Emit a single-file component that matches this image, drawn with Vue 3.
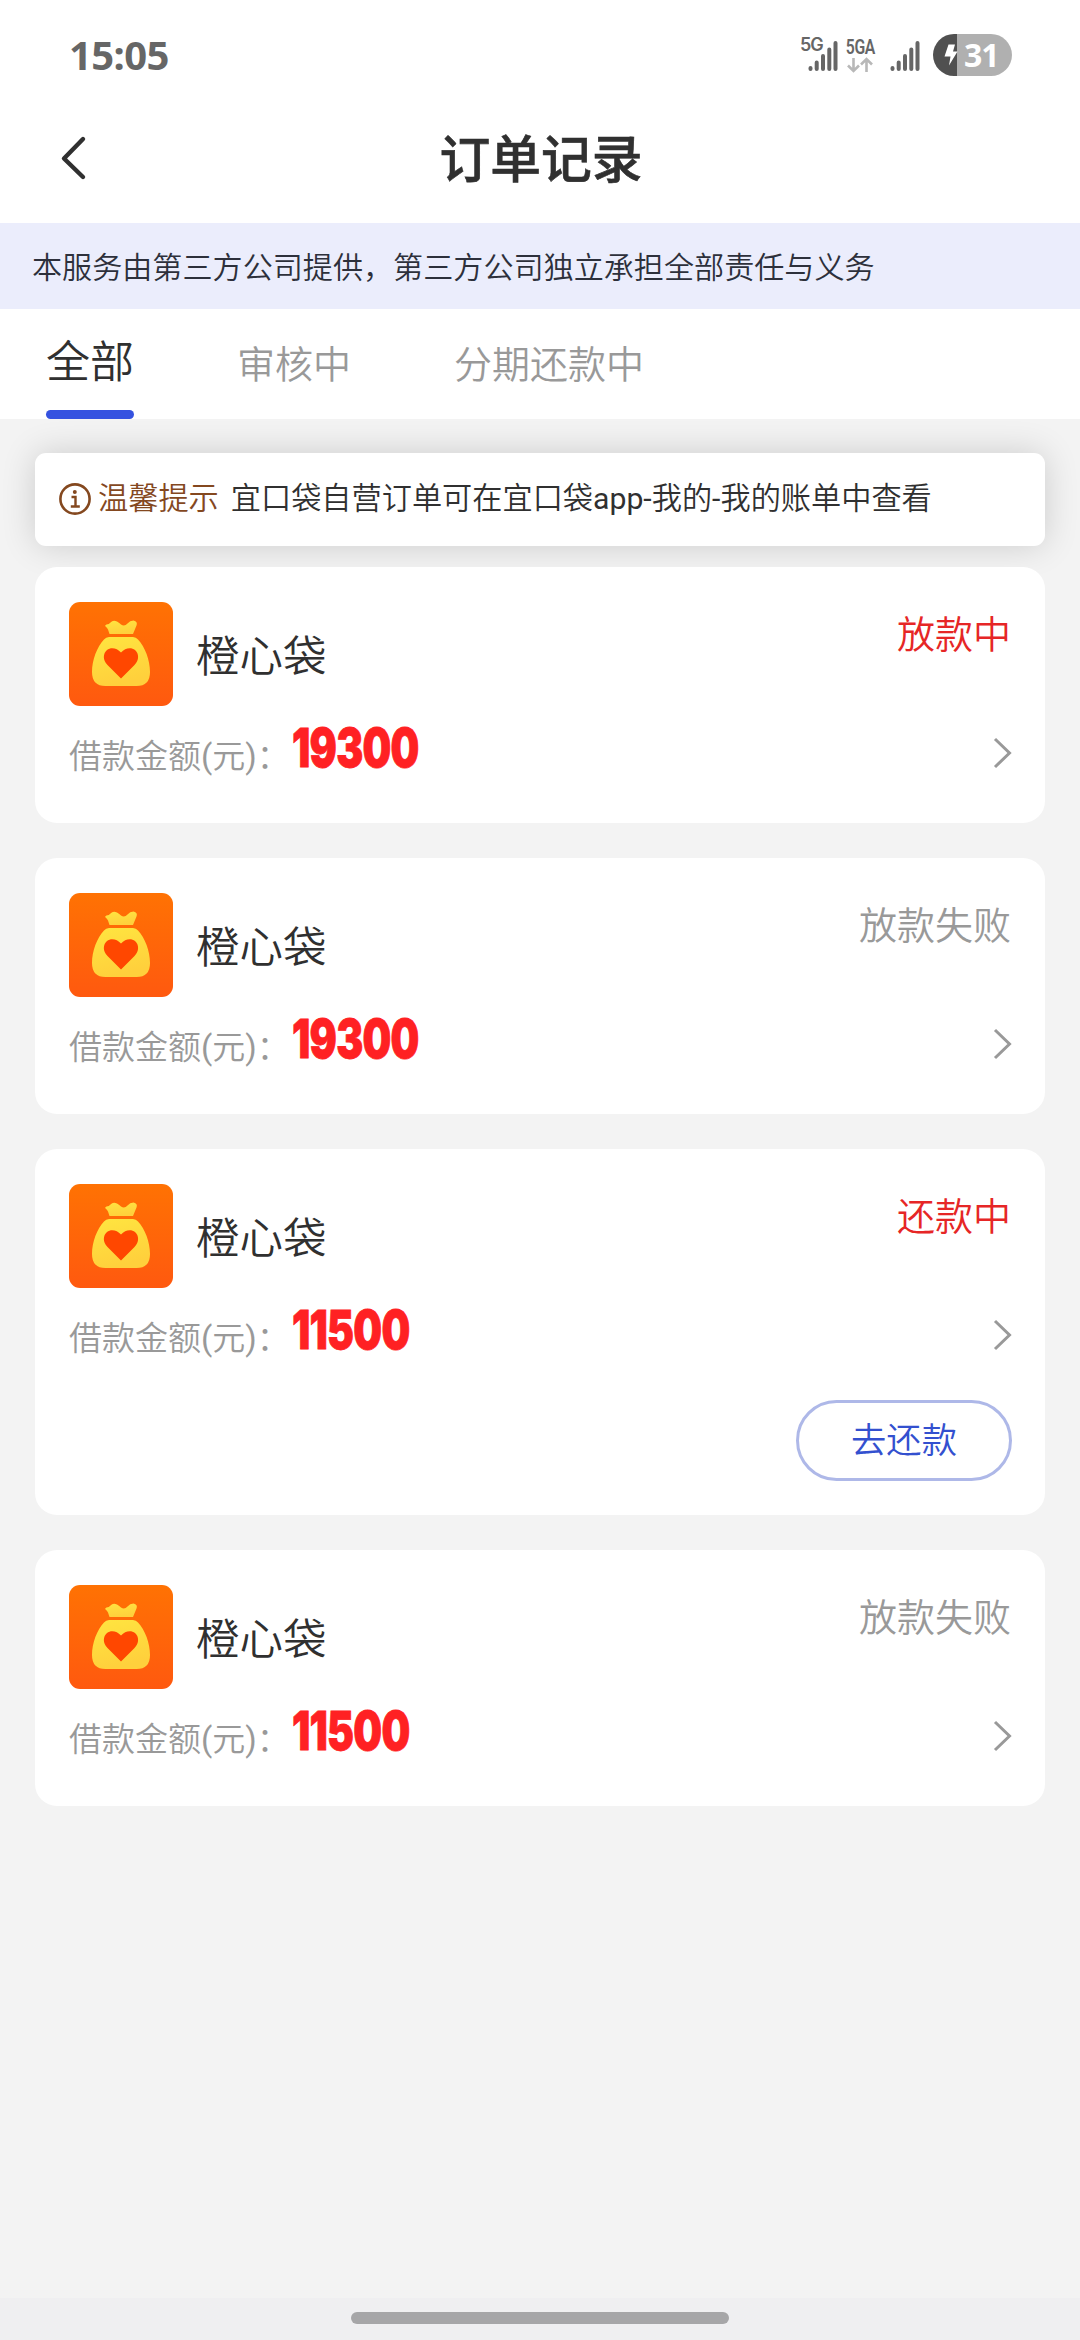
<script setup>
const tabs = ['全部', '审核中', '分期还款中']
const orders = [
  { id: 1, name: '橙心袋', amount: '19300', status: '放款中', active: true },
  { id: 2, name: '橙心袋', amount: '19300', status: '放款失败', active: false },
  { id: 3, name: '橙心袋', amount: '11500', status: '还款中', active: true, action: '去还款' },
  { id: 4, name: '橙心袋', amount: '11500', status: '放款失败', active: false },
]
</script>

<template>
  <div class="screen">
    <div class="statusbar">
      <span class="time">15:05</span>
      <div class="indicators">
        <div class="sim">
          <span class="net">5G</span>
          <svg class="bars" width="30" height="32" viewBox="0 0 30 32">
            <path d="M2.5 28v1M8.7 22.500v6.500M15 16v13M21.300 9.500v19.500M27.500 3v26" />
          </svg>
        </div>
        <div class="data">
          <span class="fivega">5GA</span>
          <svg class="arrows" width="26" height="16" viewBox="0 0 26 16">
            <path d="M6.500 1v13M1 8.500l5.500 5.500 5.500-5.500M19.500 15V2M14 7.500L19.500 2 25 7.500" />
          </svg>
        </div>
        <svg class="bars second" width="30" height="32" viewBox="0 0 30 32">
          <path d="M2.500 28v1M8.700 22.500v6.500M15 16v13M21.300 9.500v19.500M27.500 3v26" />
        </svg>
        <div class="battery">
          <svg width="14" height="22" viewBox="0 0 14 22">
            <path d="M4.500 0.500H11L9 7.500H13.500L5 21.500L6.500 12.500H0.500Z" fill="#fff" />
          </svg>
          <span>31</span>
        </div>
      </div>
    </div>

    <header class="header">
      <svg class="back" width="28" height="46" viewBox="0 0 28 46">
        <path d="M23 4L4 23.500L23 42" />
      </svg>
      <h1>订单记录</h1>
    </header>

    <div class="banner">本服务由第三方公司提供，第三方公司独立承担全部责任与义务</div>

    <nav class="tabs">
      <div v-for="(tab, i) in tabs" :key="tab" class="tab" :class="{ current: i === 0 }">{{ tab }}</div>
    </nav>

    <main class="content">
      <div class="notice">
        <svg width="32" height="32" viewBox="0 0 32 32">
          <circle cx="16" cy="16" r="14.600" fill="none" stroke="#84481f" stroke-width="2.600" />
          <circle cx="15.800" cy="9" r="2" fill="#84481f" />
          <path d="M12.500 14h4v9.500M11.800 23.500h9" fill="none" stroke="#84481f" stroke-width="2.400" />
        </svg>
        <span class="tip">温馨提示</span>
        <span class="message">宜口袋自营订单可在宜口袋<span class="latin">app-</span>我的<span class="latin">-</span>我的账单中查看</span>
      </div>

      <section v-for="o in orders" :key="o.id" class="card">
        <div class="top">
          <svg class="logo" width="104" height="104" viewBox="0 0 104 104">
            <defs>
              <linearGradient :id="'bg' + o.id" x1="0" y1="0" x2="0" y2="1">
                <stop offset="0" stop-color="#ff7203" />
                <stop offset="1" stop-color="#ff590f" />
              </linearGradient>
              <linearGradient :id="'bag' + o.id" x1="0" y1="0" x2="0.300" y2="1">
                <stop offset="0" stop-color="#ffe540" />
                <stop offset="1" stop-color="#ffd03c" />
              </linearGradient>
            </defs>
            <rect width="104" height="104" rx="11" :fill="`url(#bg${o.id})`" />
            <path
              :fill="`url(#bag${o.id})`"
              d="M40.500 32L39 27.500Q38 25.500 36.500 24.500Q35.500 23 37.500 22.500Q40 22.300 41.500 20.500Q44 17.500 48 19.500Q50.500 21 52 22.500Q55.500 25 58.500 21.500Q61 18.500 64.500 18.500Q69 19.500 67.500 23.500L64 32Z"
            />
            <path
              :fill="`url(#bag${o.id})`"
              d="M40 35H64Q67 35 69 37.500C76 45 81 58 81 70Q81 84 67.500 84H36.500Q23 84 23 70C23 58 28 45 35 37.500Q37 35 40 35Z"
            />
            <path
              fill="#ff4700"
              d="M52 76.500L38.500 63C33.500 58 34 51.500 38 48C42 44.800 48 46 52 50.500C56 46 62 44.800 66 48C70 51.500 70.500 58 65.500 63Z"
            />
          </svg>
          <span class="name">{{ o.name }}</span>
          <span class="status" :class="{ active: o.active }">{{ o.status }}</span>
        </div>
        <div class="detail">
          <span class="label">借款金额<span class="latin">(</span>元<span class="latin">)</span>：</span>
          <span class="amount">{{ o.amount }}</span>
          <svg class="chevron" width="19" height="32" viewBox="0 0 19 32">
            <path d="M2 2L16.500 16L2 30" />
          </svg>
        </div>
        <div v-if="o.action" class="actions">
          <button class="repay">{{ o.action }}</button>
        </div>
      </section>
    </main>

    <footer class="gesture"><i></i></footer>
  </div>
</template>

<style>
body {
  background: #f3f3f3;
}
</style>

<style scoped>
.screen {
  display: flex;
  flex-direction: column;
  width: 1080px;
  height: 2340px;
  overflow: hidden;
  background: #f3f3f3;
  color: #303030;
  font-family: Roboto, "Noto Sans CJK SC", sans-serif;
  font-weight: 350;
}
svg {
  display: block;
  flex: none;
}
.latin {
  font-weight: 400;
}
.statusbar {
  display: flex;
  flex: none;
  justify-content: space-between;
  align-items: center;
  height: 110px;
  padding: 0 68px 0 69px;
  background: #fff;
}
.time {
  font: 700 40px/50px "Noto Sans", sans-serif;
  letter-spacing: -0.6px;
  color: #666;
}
.indicators {
  display: flex;
  align-items: center;
}
.sim {
  display: flex;
  align-items: flex-start;
  width: 37px;
  margin-right: 9px;
}
.net {
  width: 8px;
  white-space: nowrap;
  font: 600 18px/18px Inter, sans-serif;
  letter-spacing: -1px;
  color: #666;
  margin-top: -2px;
}
.bars {
  fill: none;
  stroke: #666;
  stroke-width: 4;
  stroke-linecap: round;
}
.sim .bars {
  margin-top: 2px;
}
.second {
  margin: 2px 13px 0 16px;
}
.data {
  display: flex;
  flex-direction: column;
  align-items: center;
  width: 28px;
}
.fivega {
  font: 600 21px/20px Roboto, sans-serif;
  letter-spacing: -0.5px;
  color: #666;
  transform: scaleX(0.75);
}
.arrows {
  fill: none;
  stroke: #b8b8b8;
  stroke-width: 2.6;
}
.battery {
  display: flex;
  align-items: center;
  width: 79px;
  height: 42px;
  box-sizing: border-box;
  padding-left: 11px;
  border-radius: 21px;
  background: linear-gradient(90deg, #505050 24px, #b0b0b0 24px);
  color: #fff;
  font: 700 32px/42px "Noto Sans", sans-serif;
}
.battery span {
  margin: -1px 0 0 6px;
  letter-spacing: -1px;
}
.header {
  display: grid;
  grid-template-columns: 120px 1fr 120px;
  align-items: center;
  flex: none;
  height: 100px;
  padding-bottom: 13px;
  background: #fff;
}
.back {
  margin: -4px 0 0 60px;
  fill: none;
  stroke: #303030;
  stroke-width: 4.4;
  stroke-linecap: round;
  stroke-linejoin: round;
}
h1 {
  margin: 2px 0 0 2px;
  text-align: center;
  font-size: 50.8px;
  line-height: 70px;
  font-weight: 500;
  -webkit-text-stroke: 0.6px #303030;
}
.banner {
  flex: none;
  height: 86px;
  padding-left: 32px;
  background: #ebedfc;
  color: #2d303b;
  font-size: 30.1px;
  line-height: 89px;
  white-space: nowrap;
}
.tabs {
  display: flex;
  align-items: baseline;
  flex: none;
  gap: 103px;
  height: 110px;
  padding-left: 46px;
  background: #fff;
  box-sizing: border-box;
}
.tab {
  color: #999;
  font-size: 38px;
}
.tab.current {
  display: flex;
  flex-direction: column;
  color: #303030;
  font-size: 44px;
  line-height: 109px;
}
.tab.current::after {
  content: "";
  height: 9px;
  margin-top: -8px;
  border-radius: 5px;
  background: #3552e0;
}
.content {
  display: flex;
  flex: 1;
  flex-direction: column;
  gap: 35px;
  overflow: hidden;
  padding: 34px 35px 0;
}
.notice {
  display: flex;
  align-items: center;
  flex: none;
  height: 93px;
  margin-bottom: -14px;
  padding: 0 24px 2px;
  box-sizing: border-box;
  border-radius: 11px;
  background: #fff;
  box-shadow: 0 0 34px rgba(0, 0, 0, 0.16);
  font-size: 30.2px;
  white-space: nowrap;
}
.tip {
  margin: -5px 12px 0 7px;
  color: #84481f;
}
.message {
  margin-top: -5px;
}
.card {
  flex: none;
  padding: 35px 34px 34px;
  border-radius: 22px;
  background: #fff;
  /* keeps each card above the soft shadow of the notice */
  position: relative;
}
.top {
  display: flex;
  height: 104px;
}
.name {
  margin-left: 23px;
  font-size: 43.5px;
  line-height: 112px;
}
.status {
  margin-left: auto;
  color: #999;
  font-size: 38px;
  line-height: 66px;
}
.status.active {
  color: #e62626;
}
.detail {
  display: flex;
  align-items: center;
  height: 83px;
}
.label {
  color: #999;
  font-size: 33px;
  line-height: 50px;
  margin-top: 18px;
  white-space: nowrap;
}
.amount {
  margin-left: 2px;
  color: #ff2123;
  font: 900 54px/60px Inter, sans-serif;
  letter-spacing: -1px;
  -webkit-text-stroke: 0.8px #ff2123;
  transform: scaleX(0.75);
  transform-origin: 0 50%;
}
.chevron {
  margin: 11px -1px 0 auto;
  fill: none;
  stroke: #999;
  stroke-width: 3;
}
.actions {
  display: flex;
  justify-content: flex-end;
  height: 110px;
  padding-top: 29px;
  box-sizing: border-box;
}
.repay {
  flex: none;
  width: 216px;
  height: 81px;
  margin-right: -1px;
  padding: 0 0 6px;
  border: 3px solid #aeb8e8;
  border-radius: 41px;
  background: #fff;
  color: #3350cf;
  font-family: inherit;
  font-weight: inherit;
  font-size: 35.3px;
}
.gesture {
  display: flex;
  justify-content: center;
  flex: none;
  height: 28px;
  padding-top: 14px;
  background: #efeff1;
}
.gesture i {
  width: 378px;
  height: 12px;
  border-radius: 6px;
  background: #a6a6a8;
}
</style>
